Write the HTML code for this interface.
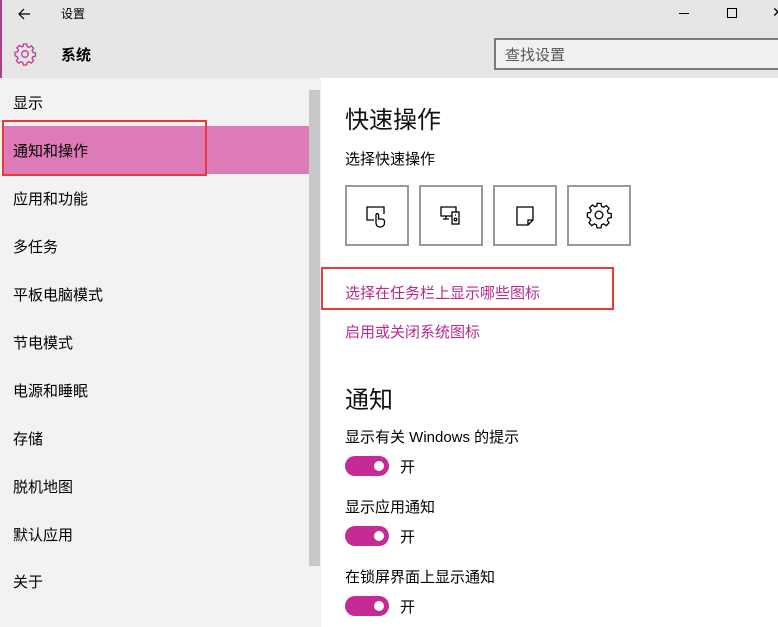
<!DOCTYPE html>
<html><head><meta charset="utf-8"><style>
*{margin:0;padding:0;box-sizing:border-box}
body{width:778px;height:627px;overflow:hidden;position:relative;background:#fff;font-family:"Liberation Sans","Noto Sans CJK SC",sans-serif;color:#000}
.a{position:absolute;white-space:nowrap}
.hdr{left:0;top:0;width:778px;height:78px;background:#e6e6e6}
.left{left:0;top:78px;width:321px;height:549px;background:#f2f2f2}
.item{left:13px;font-size:15px}
.box{position:absolute;top:185px;width:64px;height:61px;border:2px solid #999;background:#fff}
.box svg{position:absolute;left:16px;top:14px}
.tog{position:absolute;left:345px;width:44px;height:20px;border-radius:10px;background:#c42c93}
.tog:after{content:"";position:absolute;right:5px;top:5px;width:10px;height:10px;border-radius:50%;background:#fff}
.lbl{font-size:15px}
.link{color:#b82b8c;font-size:15px}
</style></head><body>
<div class="a hdr"></div>
<div class="a" style="left:0;top:0;width:2px;height:627px;background:#b03a8c"></div>
<svg class="a" style="left:16px;top:6px" width="16" height="16" viewBox="0 0 16 16"><path d="M14 8H3M8 3L3 8l5 5" stroke="#000" stroke-width="1.2" fill="none"/></svg>
<div class="a" style="left:61px;top:5px;font-size:12px">设置</div>
<div class="a" style="left:679px;top:13px;width:10px;height:1px;background:#000"></div>
<div class="a" style="left:727px;top:8px;width:10px;height:10px;border:1px solid #000"></div>
<div class="a" style="left:772px;top:4px;font-size:14px">✕</div>
<svg class="a" style="left:13px;top:42px" width="24" height="24" viewBox="0 0 24 24"><path fill="none" stroke="#c0399a" stroke-width="1.3" d="M10.3 2h3.4l.5 2.6 1.8.8 2.2-1.5 2.4 2.4-1.5 2.2.8 1.8 2.6.5v3.4l-2.6.5-.8 1.8 1.5 2.2-2.4 2.4-2.2-1.5-1.8.8-.5 2.6h-3.4l-.5-2.6-1.8-.8-2.2 1.5-2.4-2.4 1.5-2.2-.8-1.8L2 13.7v-3.4l2.6-.5.8-1.8-1.5-2.2 2.4-2.4 2.2 1.5 1.8-.8z"/><circle cx="12" cy="12" r="3.3" fill="none" stroke="#c0399a" stroke-width="1.3"/></svg>
<div class="a" style="left:61px;top:44px;font-size:15px;font-weight:bold">系统</div>
<div class="a" style="left:494px;top:38px;width:290px;height:32px;border:2px solid #7a7a7a;background:#f0f0f0"></div>
<div class="a" style="left:505px;top:44px;font-size:15px;color:#555">查找设置</div>
<div class="a left"></div>
<div class="a" style="left:2px;top:126px;width:307px;height:48px;background:#dc7bb8"></div>
<div class="a" style="left:2px;top:120px;width:205px;height:56px;border:2px solid #e8393f"></div>
<div class="a" style="left:309px;top:90px;width:11px;height:476px;background:#c8c8c8"></div>
<div class="a item" style="top:92px">显示</div>
<div class="a item" style="top:140px">通知和操作</div>
<div class="a item" style="top:188px">应用和功能</div>
<div class="a item" style="top:236px">多任务</div>
<div class="a item" style="top:284px">平板电脑模式</div>
<div class="a item" style="top:332px">节电模式</div>
<div class="a item" style="top:380px">电源和睡眠</div>
<div class="a item" style="top:428px">存储</div>
<div class="a item" style="top:476px">脱机地图</div>
<div class="a item" style="top:524px">默认应用</div>
<div class="a item" style="top:571px">关于</div>
<div class="a" style="left:345px;top:100px;font-size:24px;color:#111">快速操作</div>
<div class="a lbl" style="left:345px;top:148px">选择快速操作</div>
<div class="box" style="left:345px"><svg width="28" height="28" viewBox="0 0 28 28" fill="none" stroke="#000" stroke-width="1.3"><path d="M11 19H4V6h17v7"/><path d="M13 22v-8a1.3 1.3 0 012.6 0v4h3.4a2.5 2.5 0 012.5 2.5V22a4 4 0 01-4 4h-1a4 4 0 01-3.5-4z"/></svg></div>
<div class="box" style="left:419px"><svg width="28" height="28" viewBox="0 0 28 28" fill="none" stroke="#000" stroke-width="1.3"><path d="M15 15H4V6h15v5M9 15v3H6M9 18h3"/><rect x="15" y="11" width="7" height="12"/><circle cx="18.5" cy="18.5" r="1.3"/><path d="M18 14h1"/></svg></div>
<div class="box" style="left:493px"><svg width="28" height="28" viewBox="0 0 28 28" fill="none" stroke="#000" stroke-width="1.3"><path d="M6 6h16v13l-5 5H6z"/><path d="M22 19h-5v5"/></svg></div>
<div class="box" style="left:567px"><svg width="28" height="28" viewBox="0 0 24 24" fill="none" stroke="#000" stroke-width="1.1"><path d="M10.3 2h3.4l.5 2.6 1.8.8 2.2-1.5 2.4 2.4-1.5 2.2.8 1.8 2.6.5v3.4l-2.6.5-.8 1.8 1.5 2.2-2.4 2.4-2.2-1.5-1.8.8-.5 2.6h-3.4l-.5-2.6-1.8-.8-2.2 1.5-2.4-2.4 1.5-2.2-.8-1.8L2 13.7v-3.4l2.6-.5.8-1.8-1.5-2.2 2.4-2.4 2.2 1.5 1.8-.8z"/><circle cx="12" cy="12" r="3.3"/></svg></div>
<div class="a" style="left:321px;top:267px;width:293px;height:43px;border:2px solid #e8393f"></div>
<div class="a link" style="left:345px;top:282px">选择在任务栏上显示哪些图标</div>
<div class="a link" style="left:345px;top:321px">启用或关闭系统图标</div>
<div class="a" style="left:345px;top:380px;font-size:24px;color:#111">通知</div>
<div class="a lbl" style="left:345px;top:426px">显示有关 Windows 的提示</div>
<div class="tog" style="top:456px"></div><div class="a lbl" style="left:400px;top:456px">开</div>
<div class="a lbl" style="left:345px;top:496px">显示应用通知</div>
<div class="tog" style="top:526px"></div><div class="a lbl" style="left:400px;top:526px">开</div>
<div class="a lbl" style="left:345px;top:566px">在锁屏界面上显示通知</div>
<div class="tog" style="top:596px"></div><div class="a lbl" style="left:400px;top:596px">开</div>
</body></html>
